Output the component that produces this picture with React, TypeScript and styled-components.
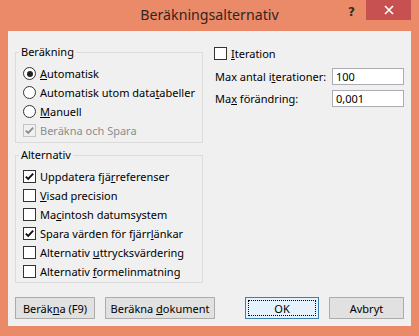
import React from "react";
import styled, { createGlobalStyle } from "styled-components";

const Global = createGlobalStyle`
  html, body { margin: 0; padding: 0; background: #ffffff; }
  body { font-family: "Noto Sans", "Open Sans", sans-serif; }
  * { box-sizing: border-box; }
`;

const Window = styled.div`
  width: 419px;
  height: 336px;
  background: #ea8a68;
  display: flex;
  flex-direction: column;
  padding: 0 8px 10px 8px;
`;

const TitleBar = styled.div`
  height: 31px;
  flex: none;
  display: grid;
  grid-template-columns: 1fr auto 1fr;
  align-items: start;
`;

const Title = styled.div`
  grid-column: 2;
  font-size: 14.2px;
  line-height: 30px;
  color: #33241e;
  white-space: nowrap;
`;

const Caption = styled.div`
  grid-column: 3;
  justify-self: end;
  display: flex;
  align-items: flex-start;
`;

const HelpButton = styled.div`
  width: 29px;
  height: 20px;
  display: flex;
  align-items: center;
  justify-content: center;
  font-family: "DejaVu Sans", sans-serif;
  font-weight: bold;
  font-size: 12px;
  color: #3a2a22;
  padding-top: 4px;
`;

const CloseButton = styled.div`
  width: 45px;
  height: 20px;
  background: #c75050;
  display: flex;
  align-items: center;
  justify-content: center;
`;

const Client = styled.div`
  flex: 1;
  background: #f0f0f0;
  display: flex;
  flex-direction: column;
  padding: 13px 7px 7px 7px;
  font-size: 11px;
  color: #000000;
`;

const Top = styled.div`
  display: flex;
  gap: 11px;
`;

const LeftColumn = styled.div`
  width: 188px;
  display: flex;
  flex-direction: column;
  gap: 4px;
`;

const Group = styled.fieldset<{ $bottom: number }>`
  margin: 0;
  padding: 4px 0 ${(p) => p.$bottom}px 0;
  border: 1px solid #dcdcdc;
  min-width: 0;
`;

const Legend = styled.legend`
  margin-left: 3px;
  padding: 0 2px;
  font-size: 11px;
  line-height: 16px;
`;

const Item = styled.div<{ $disabled?: boolean }>`
  height: 19px;
  display: flex;
  align-items: center;
  gap: 4px;
  padding-left: 7px;
  white-space: nowrap;
  color: ${(p) => (p.$disabled ? "#8d8d8d" : "#000000")};
`;

const RadioCircle = styled.span<{ $checked?: boolean }>`
  width: 13px;
  height: 13px;
  flex: none;
  border-radius: 50%;
  border: 1px solid #333333;
  background: #ffffff;
  display: flex;
  align-items: center;
  justify-content: center;
  &::after {
    content: "";
    width: 6px;
    height: 6px;
    border-radius: 50%;
    background: ${(p) => (p.$checked ? "#222222" : "transparent")};
  }
`;

const Box = styled.span<{ $disabled?: boolean }>`
  width: 13px;
  height: 13px;
  flex: none;
  border: 1px solid ${(p) => (p.$disabled ? "#c4c4c4" : "#333333")};
  background: ${(p) => (p.$disabled ? "#f0f0f0" : "#ffffff")};
  display: flex;
  align-items: center;
  justify-content: center;
`;

const Key = styled.span`
  text-decoration: underline;
  text-underline-offset: 1px;
`;

const RightColumn = styled.div`
  flex: 1;
  display: flex;
  flex-direction: column;
`;

const IterationRow = styled(Item)`
  padding-left: 0;
`;

const FormGrid = styled.div`
  margin-top: 5px;
  display: grid;
  grid-template-columns: 1fr 72px;
  row-gap: 5px;
  align-items: center;
`;

const FieldLabel = styled.span`
  padding-left: 1px;
  line-height: 17px;
  white-space: nowrap;
`;

const TextField = styled.div`
  height: 17px;
  border: 1px solid #abadb3;
  background: #ffffff;
  padding-left: 3px;
  line-height: 15px;
  font-size: 11px;
`;

const ButtonRow = styled.div`
  margin-top: auto;
  display: flex;
  gap: 10px;
`;

const Button = styled.div<{ $width: number; $default?: boolean }>`
  width: ${(p) => p.$width}px;
  height: 22px;
  border: 1px solid ${(p) => (p.$default ? "#3c7fb1" : "#acacac")};
  background: ${(p) => (p.$default ? "#e5f1fb" : "#e1e1e1")};
  display: flex;
  align-items: center;
  justify-content: center;
  padding: 2px;
  white-space: nowrap;
  font-size: 11px;
  &:nth-child(3) {
    margin-left: auto;
  }
`;

const FocusRect = styled.div`
  width: 100%;
  height: 100%;
  border: 1px dotted #000000;
  display: flex;
  align-items: center;
  justify-content: center;
`;

const Check = ({ disabled }: { disabled?: boolean }) => (
  <svg width="11" height="11" viewBox="0 0 11 11">
    <path
      d="M1.8 5.6 L4.2 8 L9.2 2.6"
      fill="none"
      stroke={disabled ? "#8d8d8d" : "#111111"}
      strokeWidth="1.9"
    />
  </svg>
);

const CheckBox = ({ checked, disabled }: { checked?: boolean; disabled?: boolean }) => (
  <Box $disabled={disabled}>{checked ? <Check disabled={disabled} /> : null}</Box>
);

export default function App() {
  return (
    <>
      <Global />
      <Window>
        <TitleBar>
          <Title>Beräkningsalternativ</Title>
          <Caption>
            <HelpButton>?</HelpButton>
            <CloseButton>
              <svg width="10" height="10" viewBox="0 0 10 10">
                <path d="M1 1 L9 9 M9 1 L1 9" stroke="#ffffff" strokeWidth="1.6" />
              </svg>
            </CloseButton>
          </Caption>
        </TitleBar>
        <Client>
          <Top>
            <LeftColumn>
              <Group $bottom={2}>
                <Legend>Beräkning</Legend>
                <Item>
                  <RadioCircle $checked />
                  <span>
                    <Key>A</Key>utomatisk
                  </span>
                </Item>
                <Item>
                  <RadioCircle />
                  <span>
                    Automatisk utom data<Key>t</Key>abeller
                  </span>
                </Item>
                <Item>
                  <RadioCircle />
                  <span>
                    <Key>M</Key>anuell
                  </span>
                </Item>
                <Item $disabled>
                  <CheckBox checked disabled />
                  <span>Beräkna och Spara</span>
                </Item>
              </Group>
              <Group $bottom={1}>
                <Legend>Alternativ</Legend>
                <Item>
                  <CheckBox checked />
                  <span>
                    Uppdatera fjä<Key>r</Key>referenser
                  </span>
                </Item>
                <Item>
                  <CheckBox />
                  <span>
                    <Key>V</Key>isad precision
                  </span>
                </Item>
                <Item>
                  <CheckBox />
                  <span>
                    Ma<Key>c</Key>intosh datumsystem
                  </span>
                </Item>
                <Item>
                  <CheckBox checked />
                  <span>
                    Spara värden för fjärr<Key>l</Key>änkar
                  </span>
                </Item>
                <Item>
                  <CheckBox />
                  <span>
                    Alternativ <Key>u</Key>ttrycksvärdering
                  </span>
                </Item>
                <Item>
                  <CheckBox />
                  <span>
                    Alternativ <Key>f</Key>ormelinmatning
                  </span>
                </Item>
              </Group>
            </LeftColumn>
            <RightColumn>
              <IterationRow>
                <CheckBox />
                <span>
                  <Key>I</Key>teration
                </span>
              </IterationRow>
              <FormGrid>
                <FieldLabel>
                  Max antal i<Key>t</Key>erationer:
                </FieldLabel>
                <TextField>100</TextField>
                <FieldLabel>
                  Ma<Key>x</Key> förändring:
                </FieldLabel>
                <TextField>0,001</TextField>
              </FormGrid>
            </RightColumn>
          </Top>
          <ButtonRow>
            <Button $width={80}>
              <span>
                Beräk<Key>n</Key>a (F9)
              </span>
            </Button>
            <Button $width={110}>
              <span>
                Beräkna <Key>d</Key>okument
              </span>
            </Button>
            <Button $width={74} $default>
              <FocusRect>OK</FocusRect>
            </Button>
            <Button $width={75}>Avbryt</Button>
          </ButtonRow>
        </Client>
      </Window>
    </>
  );
}
